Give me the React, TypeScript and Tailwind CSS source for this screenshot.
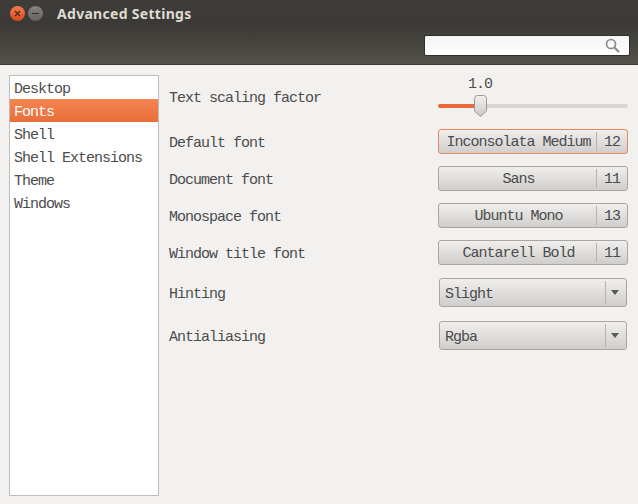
import React from 'react';

const mono = "font-['Liberation_Mono',monospace] text-[15px] leading-[18px] tracking-[-1px]";

const sections = ['Desktop', 'Fonts', 'Shell', 'Shell Extensions', 'Theme', 'Windows'];

const fontRows = [
  { label: 'Default font', name: 'Inconsolata Medium', size: '12', focused: true },
  { label: 'Document font', name: 'Sans', size: '11', focused: false },
  { label: 'Monospace font', name: 'Ubuntu Mono', size: '13', focused: false },
  { label: 'Window title font', name: 'Cantarell Bold', size: '11', focused: false },
];

const FontButton = ({ name, size, focused }: { name: string; size: string; focused: boolean }) => (
  <div
    className={`flex h-[25px] w-[190px] items-center rounded-[3px] border bg-gradient-to-b from-[#f0efee] to-[#cfcecc] text-[#4c4c4c] ${
      focused ? 'border-[#e8875f]' : 'border-[#a9a7a4]'
    }`}
  >
    <span className="flex-1 pt-[3px] pl-[2px] text-center">{name}</span>
    <span className="h-[19px] w-px bg-[#b5b3b0]" />
    <span className="w-[30px] pt-[3px] text-center">{size}</span>
  </div>
);

const Combo = ({ value }: { value: string }) => (
  <div className="ml-px flex h-[29px] w-[188px] items-center rounded-[3px] border border-[#a9a7a4] bg-gradient-to-b from-[#f0efee] to-[#cfcecc] text-[#4c4c4c]">
    <span className="flex-1 pt-[4px] pl-[5px]">{value}</span>
    <span className="h-[23px] w-px bg-[#b5b3b0]" />
    <span className="flex w-[20px] justify-center pr-[2px]">
      <svg width="8" height="5" viewBox="0 0 8 5">
        <path d="M0 0h8L4 5z" fill="#5a5a58" />
      </svg>
    </span>
  </div>
);

const App: React.FC = () => {
  return (
    <div className={`flex h-[504px] w-[638px] flex-col overflow-hidden bg-[#f2f1f0] ${mono}`}>
      {/* title bar */}
      <div className="flex h-[27px] items-center bg-gradient-to-b from-[#3e3d39] to-[#3a3935]">
        <div className="ml-[10px] flex h-[15px] w-[15px] items-center justify-center rounded-full bg-gradient-to-b from-[#f37b4a] to-[#d8481c]">
          <svg width="7" height="7" viewBox="0 0 7 7">
            <path d="M1 1l5 5M6 1l-5 5" stroke="#4a2a1c" strokeWidth="1.2" />
          </svg>
        </div>
        <div className="ml-[3px] flex h-[15px] w-[15px] items-center justify-center rounded-full bg-gradient-to-b from-[#85847f] to-[#63625d]">
          <span className="h-px w-[7px] bg-[#35342f]" />
        </div>
        <span className="ml-[14px] font-['Noto_Sans',sans-serif] text-[14px] font-bold tracking-[0.3px] text-[#dfdbd2]">
          Advanced Settings
        </span>
      </div>
      {/* toolbar */}
      <div className="flex h-[38px] items-center justify-end border-b border-[#3a3935] bg-gradient-to-b from-[#3c3b37] to-[#545149] pr-2">
        <div className="flex h-[21px] w-[206px] items-center justify-end rounded-[2px] border border-[#2f2e2a] bg-gradient-to-b from-[#f4f4f4] to-white pr-[9px]">
          <svg width="15" height="15" viewBox="0 0 15 15" fill="none" stroke="#8a8a88">
            <circle cx="6" cy="6" r="4.5" strokeWidth="1.7" />
            <path d="M9.5 9.5l4.5 4.5" strokeWidth="2.2" />
          </svg>
        </div>
      </div>
      {/* body */}
      <div className="flex flex-1 pt-[10px] pb-[8px] pl-[9px] pr-[10px]">
        <div className="w-[150px] border border-[#c0bdb9] bg-white text-[#4c4c4c]">
          {sections.map((s) => (
            <div
              key={s}
              className={`flex h-[23px] items-center pt-[5px] pl-1 ${
                s === 'Fonts' ? 'bg-gradient-to-b from-[#f58551] to-[#e96d3a] text-white' : ''
              }`}
            >
              {s}
            </div>
          ))}
        </div>
        <div className="ml-[10px] flex flex-1 flex-col text-[#4c4c4c]">
          <div className="flex h-[54px] justify-between">
            <span className="mt-[15px]">Text scaling factor</span>
            <div className="flex w-[190px] flex-col">
              <div className="w-[84px] pt-[2px] text-center leading-[16px]">1.0</div>
              <div className="relative mt-[11px] flex h-1 rounded-full bg-[#d8d6d3]">
                <div className="h-1 w-[39px] rounded-full bg-[#e8693a]" />
                <svg
                  className="absolute top-[-9px] left-[36px]"
                  width="13"
                  height="22"
                  viewBox="0 0 13 22"
                >
                  <defs>
                    <linearGradient id="thumb" x1="0" y1="0" x2="0" y2="1">
                      <stop offset="0" stopColor="#f2f1f0" />
                      <stop offset="1" stopColor="#cbc9c6" />
                    </linearGradient>
                  </defs>
                  <path
                    d="M3.5.5h6a3 3 0 0 1 3 3V16l-6 5.5L.5 16V3.5a3 3 0 0 1 3-3z"
                    fill="url(#thumb)"
                    stroke="#9b9995"
                  />
                </svg>
              </div>
            </div>
          </div>
          <div className="flex flex-col gap-[12px]">
            {fontRows.map((r) => (
              <div key={r.label} className="flex items-center justify-between">
                <span className="pt-[4px]">{r.label}</span>
                <FontButton name={r.name} size={r.size} focused={r.focused} />
              </div>
            ))}
          </div>
          <div className="mt-[13px] flex flex-col gap-[14px]">
            <div className="flex items-center justify-between">
              <span className="pt-[4px]">Hinting</span>
              <div className="w-[190px]">
                <Combo value="Slight" />
              </div>
            </div>
            <div className="flex items-center justify-between">
              <span className="pt-[4px]">Antialiasing</span>
              <div className="w-[190px]">
                <Combo value="Rgba" />
              </div>
            </div>
          </div>
        </div>
      </div>
    </div>
  );
};

export default App;
